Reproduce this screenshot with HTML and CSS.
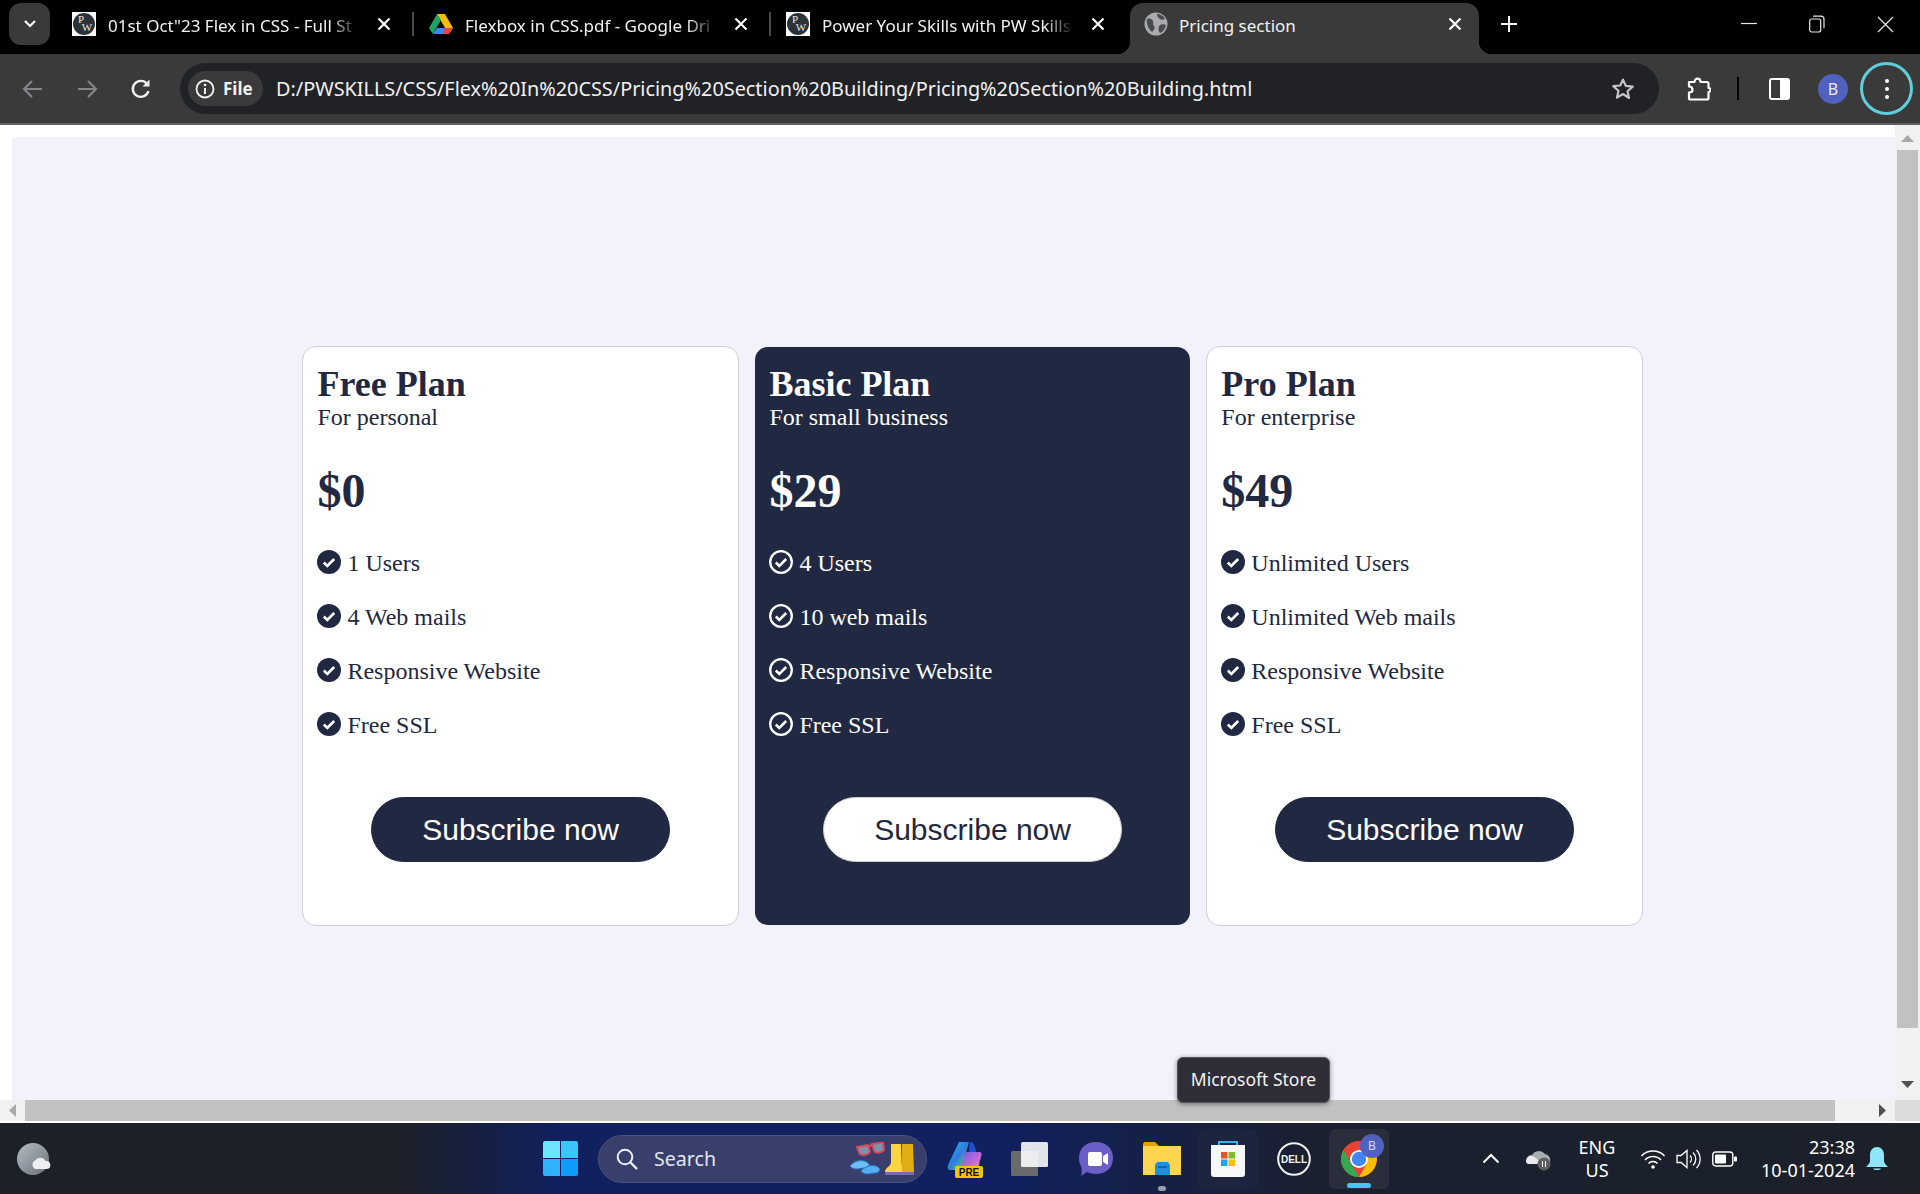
FILE: index.html
```html
<!DOCTYPE html>
<html lang="en">
<head>
<meta charset="utf-8">
<title>Pricing section</title>
<link rel="stylesheet" href="styles.css">
</head>
<body>
<div class="tabstrip">
  <div class="tab-search"><svg width="14" height="10" viewBox="0 0 14 10"><path d="M2 2l5 5 5-5" fill="none" stroke="#fff" stroke-width="2.2"/></svg></div>
  <div class="tab">
    <svg class="favicon" viewBox="0 0 24 24"><rect width="24" height="24" fill="#fff"/><circle cx="12" cy="12" r="11" fill="#2c3238"/><text x="9" y="11" class="pw">P</text><text x="15" y="19" class="pw">W</text></svg>
    <span class="tab-title">01st Oct"23 Flex in CSS - Full St</span>
    <svg class="tab-close" viewBox="0 0 16 16"><path d="M2.5 2.5l11 11M13.5 2.5l-11 11" stroke="#fff" stroke-width="2.2"/></svg>
    <i class="tab-sep"></i>
  </div>
  <div class="tab">
    <svg class="favicon" viewBox="0 0 24 24"><path d="M8 2h8l8 14h-8z" fill="#fbbc04"/><path d="M8 2L0 16l4 6 8-14z" fill="#1fa463"/><path d="M8 16h16l-4 6H4z" fill="#4285f4"/><path d="M20 22l4-6h-8l-2 6z" fill="#ea4335"/></svg>
    <span class="tab-title">Flexbox in CSS.pdf - Google Dri</span>
    <svg class="tab-close" viewBox="0 0 16 16"><path d="M2.5 2.5l11 11M13.5 2.5l-11 11" stroke="#fff" stroke-width="2.2"/></svg>
    <i class="tab-sep"></i>
  </div>
  <div class="tab tab-third">
    <svg class="favicon" viewBox="0 0 24 24"><rect width="24" height="24" fill="#fff"/><circle cx="12" cy="12" r="11" fill="#2c3238"/><text x="9" y="11" class="pw">P</text><text x="15" y="19" class="pw">W</text></svg>
    <span class="tab-title">Power Your Skills with PW Skills</span>
    <svg class="tab-close" viewBox="0 0 16 16"><path d="M2.5 2.5l11 11M13.5 2.5l-11 11" stroke="#fff" stroke-width="2.2"/></svg>
  </div>
  <div class="tab tab-active">
    <svg class="favicon" viewBox="0 0 24 24"><circle cx="12" cy="12" r="11.5" fill="#a9abae"/><path d="M3 7c3-1 5 0 6 2s-1 3 1 5-1 5-2 6c-3-2-6-8-5-13zM13 2c3 0 7 2 8 5-2 1-4 1-5 0s-3-2-3-5zM16 13c2-1 4-1 6 0-1 4-3 7-6 8-2-2-2-6 0-8z" fill="#4a4b4e"/></svg>
    <span class="tab-title tab-title-full">Pricing section</span>
    <svg class="tab-close" viewBox="0 0 16 16"><path d="M2.5 2.5l11 11M13.5 2.5l-11 11" stroke="#fff" stroke-width="2.2"/></svg>
  </div>
  <svg class="new-tab" viewBox="0 0 20 20"><path d="M10 2v16M2 10h16" stroke="#fff" stroke-width="2"/></svg>
  <div class="window-controls">
    <div class="win-btn"><svg width="16" height="16" viewBox="0 0 16 16"><path d="M0 7.5h16" stroke="#e6e6e6" stroke-width="1.2"/></svg></div>
    <div class="win-btn"><svg width="16" height="18" viewBox="0 0 16 18"><rect x=".7" y="4" width="11" height="13" rx="2" fill="none" stroke="#e6e6e6" stroke-width="1.2"/><path d="M4 1.2h8a3 3 0 0 1 3 3v9" fill="none" stroke="#e6e6e6" stroke-width="1.2"/></svg></div>
    <div class="win-btn"><svg width="17" height="17" viewBox="0 0 17 17"><path d="M1 1l15 15M16 1L1 16" stroke="#e6e6e6" stroke-width="1.2"/></svg></div>
  </div>
</div>

<div class="toolbar">
  <div class="nav-btn"><svg width="24" height="24" viewBox="0 0 24 24"><path d="M21 12H4M11 4l-8 8 8 8" fill="none" stroke="#85868a" stroke-width="2.2"/></svg></div>
  <div class="nav-btn"><svg width="24" height="24" viewBox="0 0 24 24"><path d="M3 12h17M13 4l8 8-8 8" fill="none" stroke="#85868a" stroke-width="2.2"/></svg></div>
  <div class="nav-btn"><svg width="24" height="24" viewBox="0 0 24 24"><path d="M19.5 14a8 8 0 1 1-1.6-7.3" fill="none" stroke="#f1f1f1" stroke-width="2.4"/><path d="M20.5 2.5v7h-7z" fill="#f1f1f1"/></svg></div>
  <div class="address">
    <div class="chip"><svg width="20" height="22" viewBox="0 0 20 22"><circle cx="10" cy="11" r="8.5" fill="none" stroke="#f1f1f1" stroke-width="1.8"/><path d="M10 10v6" stroke="#f1f1f1" stroke-width="2"/><circle cx="10" cy="7" r="1.3" fill="#f1f1f1"/></svg><span>File</span></div>
    <span class="url">D:/PWSKILLS/CSS/Flex%20In%20CSS/Pricing%20Section%20Building/Pricing%20Section%20Building.html</span>
    <svg class="star" viewBox="0 0 24 24"><path d="M12 2.6l2.8 6.3 6.9.7-5.2 4.6 1.5 6.8L12 17l-6 3.6 1.5-6.8-5.2-4.6 6.9-.7z" fill="none" stroke="#c4c5c7" stroke-width="2.2" stroke-linejoin="round"/></svg>
  </div>
  <svg class="puzzle" viewBox="0 0 24 24"><path d="M2 5h5.500c0-4.500 6-4.500 6 0H20c1 0 1.500.5 1.500 1.500v4.500c2.500 0 2.500 4 0 4v6c0 1-.5 1.500-1.500 1.500H3.500c-1 0-1.500-.5-1.500-1.500v-5.500c3 0 3.500-1.500 3.500-2.500S5 9.500 2 9.500z" fill="none" stroke="#fff" stroke-width="2.200" stroke-linejoin="round"/></svg>
  <i class="tool-sep"></i>
  <svg class="panel" viewBox="0 0 21 22"><rect x="1" y="1" width="19" height="20" rx="2" fill="none" stroke="#fff" stroke-width="2"/><path d="M11 1h7a2 2 0 0 1 2 2v16a2 2 0 0 1-2 2h-7z" fill="#fff"/></svg>
  <div class="avatar">B</div>
  <div class="menu"><i></i><i></i><i></i></div>
</div>

<div class="browser-view">
  <main class="page">
    <div class="plans">
      <section class="card">
        <h2 class="plan-name">Free Plan</h2>
        <p class="plan-for">For personal</p>
        <p class="price">$0</p>
        <ul class="features">
          <li><svg class="check" viewBox="0 0 24 24"><circle cx="12" cy="12" r="12" fill="#212842"/><path d="M6.800 12.500l3.500 3.400 6.900-6.900" fill="none" stroke="#fff" stroke-width="2.700"/></svg> 1 Users</li>
          <li><svg class="check" viewBox="0 0 24 24"><circle cx="12" cy="12" r="12" fill="#212842"/><path d="M6.800 12.500l3.500 3.400 6.900-6.900" fill="none" stroke="#fff" stroke-width="2.700"/></svg> 4 Web mails</li>
          <li><svg class="check" viewBox="0 0 24 24"><circle cx="12" cy="12" r="12" fill="#212842"/><path d="M6.800 12.500l3.500 3.400 6.900-6.900" fill="none" stroke="#fff" stroke-width="2.700"/></svg> Responsive Website</li>
          <li><svg class="check" viewBox="0 0 24 24"><circle cx="12" cy="12" r="12" fill="#212842"/><path d="M6.800 12.500l3.500 3.400 6.900-6.900" fill="none" stroke="#fff" stroke-width="2.700"/></svg> Free SSL</li>
        </ul>
        <button class="subscribe">Subscribe now</button>
      </section>
      <section class="card card-dark">
        <h2 class="plan-name">Basic Plan</h2>
        <p class="plan-for">For small business</p>
        <p class="price">$29</p>
        <ul class="features">
          <li><svg class="check" viewBox="0 0 24 24"><circle cx="12" cy="12" r="10.800" fill="none" stroke="#fff" stroke-width="2.300"/><path d="M6.800 12.500l3.500 3.400 6.900-6.900" fill="none" stroke="#fff" stroke-width="2.500"/></svg> 4 Users</li>
          <li><svg class="check" viewBox="0 0 24 24"><circle cx="12" cy="12" r="10.800" fill="none" stroke="#fff" stroke-width="2.300"/><path d="M6.800 12.500l3.500 3.400 6.900-6.900" fill="none" stroke="#fff" stroke-width="2.500"/></svg> 10 web mails</li>
          <li><svg class="check" viewBox="0 0 24 24"><circle cx="12" cy="12" r="10.800" fill="none" stroke="#fff" stroke-width="2.300"/><path d="M6.800 12.500l3.500 3.400 6.900-6.900" fill="none" stroke="#fff" stroke-width="2.500"/></svg> Responsive Website</li>
          <li><svg class="check" viewBox="0 0 24 24"><circle cx="12" cy="12" r="10.800" fill="none" stroke="#fff" stroke-width="2.300"/><path d="M6.800 12.500l3.500 3.400 6.900-6.900" fill="none" stroke="#fff" stroke-width="2.500"/></svg> Free SSL</li>
        </ul>
        <button class="subscribe">Subscribe now</button>
      </section>
      <section class="card">
        <h2 class="plan-name">Pro Plan</h2>
        <p class="plan-for">For enterprise</p>
        <p class="price">$49</p>
        <ul class="features">
          <li><svg class="check" viewBox="0 0 24 24"><circle cx="12" cy="12" r="12" fill="#212842"/><path d="M6.800 12.500l3.500 3.400 6.900-6.900" fill="none" stroke="#fff" stroke-width="2.700"/></svg> Unlimited Users</li>
          <li><svg class="check" viewBox="0 0 24 24"><circle cx="12" cy="12" r="12" fill="#212842"/><path d="M6.800 12.500l3.500 3.400 6.900-6.900" fill="none" stroke="#fff" stroke-width="2.700"/></svg> Unlimited Web mails</li>
          <li><svg class="check" viewBox="0 0 24 24"><circle cx="12" cy="12" r="12" fill="#212842"/><path d="M6.800 12.500l3.500 3.400 6.900-6.900" fill="none" stroke="#fff" stroke-width="2.700"/></svg> Responsive Website</li>
          <li><svg class="check" viewBox="0 0 24 24"><circle cx="12" cy="12" r="12" fill="#212842"/><path d="M6.800 12.500l3.500 3.400 6.900-6.900" fill="none" stroke="#fff" stroke-width="2.700"/></svg> Free SSL</li>
        </ul>
        <button class="subscribe">Subscribe now</button>
      </section>
    </div>
  </main>
  <div class="vscroll">
    <svg class="arrow-up" width="13" height="7" viewBox="0 0 13 7"><path d="M6.500 0L13 7H0z" fill="#a8a8a8"/></svg>
    <div class="vthumb"></div>
    <svg class="arrow-down" width="13" height="7" viewBox="0 0 13 7"><path d="M0 0h13L6.500 7z" fill="#505050"/></svg>
  </div>
</div>

<div class="hscroll">
  <div class="h-btn"><svg width="7" height="13" viewBox="0 0 7 13"><path d="M7 0v13L0 6.500z" fill="#a8a8a8"/></svg></div>
  <div class="hthumb"></div>
  <div class="h-track"><svg width="7" height="13" viewBox="0 0 7 13"><path d="M0 0v13l7-6.500z" fill="#505050"/></svg></div>
  <div class="h-corner"></div>
</div>

<footer class="taskbar">
  <svg class="ti weather" viewBox="0 0 34 32"><defs><linearGradient id="moon" x1="0" y1="0" x2="1" y2="1"><stop offset="0" stop-color="#b6bcc4"/><stop offset="1" stop-color="#6c727b"/></linearGradient></defs><ellipse cx="16" cy="16" rx="16" ry="16" fill="url(#moon)"/><path d="M18 26a5 5 0 0 1 .5-9 6 6 0 0 1 10 1 4 4 0 0 1 1.500 8z" fill="#eceef0"/></svg>
  <div class="win-logo"><i class="w1"></i><i class="w2"></i><i class="w3"></i><i class="w4"></i></div>
  <div class="search">
    <svg class="search-icon" viewBox="0 0 22 22"><circle cx="9" cy="9" r="7.300" fill="none" stroke="#eef" stroke-width="2"/><path d="M14.500 14.500L21 21" stroke="#eef" stroke-width="2.400"/></svg>
    <span class="search-label">Search</span>
    <svg class="search-art" viewBox="0 0 66 34"><path d="M8 5l11-2 2 7c-3 4-9 4-11 1zM23 2l11-2 1 8c-3 3-8 4-10 1z" fill="#7f93ad" stroke="#d9475f" stroke-width="2"/><path d="M19 5l4-2" stroke="#d9475f" stroke-width="2"/><path d="M1 24c5-6 13-7 18-3 3 3-1 5-5 5-5 1-10 2-13-2z" fill="#6dbcf5" stroke="#2e7bc8"/><path d="M12 29c5-6 14-7 18-3 2 3-1 5-5 5-5 1-10 2-13-2z" fill="#55aef0" stroke="#2e7bc8"/><path d="M53 2h11l1 28H48c0-4 5-5 5-9z" fill="#e0ae14"/><path d="M42 2h10l1 28H36c0-5 6-5 6-10z" fill="#f9d63f"/><rect x="36" y="30" width="29" height="3" rx="1" fill="#7a6bb0"/></svg>
  </div>
  <svg class="ti copilot" viewBox="0 0 36 38"><defs><linearGradient id="cp1" x1="0" y1="0" x2="1" y2="1"><stop offset="0" stop-color="#2bc0e8"/><stop offset=".5" stop-color="#2f7be0"/><stop offset="1" stop-color="#7ed957"/></linearGradient><linearGradient id="cp2" x1="0" y1="0" x2="1" y2="1"><stop offset="0" stop-color="#6b5be0"/><stop offset=".6" stop-color="#c86ad8"/><stop offset="1" stop-color="#f2a0b0"/></linearGradient></defs><path d="M12 2h10l-8 28H4C1 30 0 28 1 25z" fill="url(#cp1)"/><path d="M23 2c3 0 4 2 5 5l5 18-5 3-8-1z" fill="#2050d0"/><path d="M18 12h14c3 0 3 2 2 5l-3 10c-1 2-2 3-4 3H14z" fill="url(#cp2)"/><rect x="8" y="26" width="28" height="12" rx="2" fill="#fbc400"/><text x="22" y="36" class="pre">PRE</text></svg>
  <svg class="ti taskview" viewBox="0 0 38 34"><rect y="9" width="27" height="25" rx="1.500" fill="#6a6a6a"/><rect x="10" width="27" height="25" rx="1.500" fill="#fff" fill-opacity=".88"/></svg>
  <svg class="ti teams" viewBox="0 0 36 34"><path d="M18 0c10 0 17 6 17 16s-7 16-17 16c-4 0-7-1-9-2l-6 4c1-4 1-7 0-10C1 21 1 18 1 16 1 6 8 0 18 0z" fill="#6a5fc6"/><rect x="10" y="10" width="14" height="14" rx="2" fill="#fff"/><path d="M25 14l5-3v12l-5-3z" fill="#fff"/></svg>
  <div class="ti-wrap explorer"><svg viewBox="0 0 38 33"><path d="M0 2c0-1 1-2 2-2h10l4 4v6H0z" fill="#e3a10c"/><path d="M0 4h38v29H0z" fill="#fdd54e"/><path d="M12 33v-8c0-3 1-5 4-5h7c3 0 4 2 4 5v8z" fill="#1f8edb"/><path d="M15 25h9" stroke="#0b5aa0" stroke-width="1.500"/></svg><i class="dot"></i></div>
  <div class="tb-box store-box"><svg viewBox="0 0 36 36"><path d="M9 5V1h18v4" fill="none" stroke="#35b5f0" stroke-width="2"/><path d="M1 4h34v29c0 2-1 3-3 3H4c-2 0-3-1-3-3z" fill="#f7f7f7"/><rect x="11" y="11" width="6.500" height="6.500" fill="#e8532a"/><rect x="18.500" y="11" width="6.500" height="6.500" fill="#7dbb2b"/><rect x="11" y="18.500" width="6.500" height="6.500" fill="#1ea5ec"/><rect x="18.500" y="18.500" width="6.500" height="6.500" fill="#fbbb16"/></svg></div>
  <svg class="ti dell" viewBox="0 0 34 34"><circle cx="17" cy="17" r="15.800" fill="none" stroke="#f2f2f2" stroke-width="2"/><text x="17" y="20.800" class="dell-text">DELL</text></svg>
  <div class="tb-box chrome-box">
    <svg class="chrome" viewBox="0 0 36 36"><circle cx="18" cy="18" r="18" fill="#e94235"/><path d="M18 36A18 18 0 0 1 2.400 9L11 24z" fill="#34a853"/><path d="M18 36a18 18 0 0 0 16-26H18l7 14z" fill="#fbbc04"/><circle cx="18" cy="18" r="9" fill="#fff"/><circle cx="18" cy="18" r="7.200" fill="#4285f4"/></svg>
    <span class="chrome-badge">B</span>
    <i class="bar"></i>
  </div>
  <svg class="ti tray-up" viewBox="0 0 18 11"><path d="M1.500 9.500L9 2l7.500 7.500" fill="none" stroke="#fff" stroke-width="2"/></svg>
  <svg class="ti onedrive" viewBox="0 0 26 24"><path d="M3 17a5 5 0 0 1 3-9 8 8 0 0 1 13-1c4 1 6 4 5 8z" fill="#a9adb3"/><path d="M0 14c0-3 3-6 6-5 3 1 6 3 8 8H3c-2 0-3-1-3-3z" fill="#e9ebee"/><circle cx="18" cy="17" r="6.500" fill="#5e5e5e"/><path d="M16.500 14v6M19.500 14v6" stroke="#fff" stroke-width="1"/></svg>
  <div class="lang"><span>ENG</span><span>US</span></div>
  <svg class="ti wifi" viewBox="0 0 26 20"><path d="M1.500 7a16 16 0 0 1 23 0M5 11a11 11 0 0 1 16 0M8.500 14.500a6 6 0 0 1 9 0" fill="none" stroke="#fff" stroke-width="1.500"/><circle cx="13" cy="18" r="1.800" fill="#fff"/></svg>
  <svg class="ti sound" viewBox="0 0 26 20"><path d="M1 6.500h4L11 1.500v17l-6-5H1z" fill="none" stroke="#fff" stroke-width="1.300"/><path d="M14 6.500a5 5 0 0 1 0 7M17 3.500a9 9 0 0 1 0 13M20.500 1a13 13 0 0 1 0 18" fill="none" stroke="#fff" stroke-width="1.300"/></svg>
  <svg class="ti battery" viewBox="0 0 26 16"><rect x=".8" y="1" width="20" height="14" rx="3" fill="none" stroke="#fff" stroke-width="1.400"/><rect x="3" y="3.500" width="11" height="9" rx="1" fill="#fff"/><rect x="22" y="5.500" width="3" height="5" rx="1" fill="#fff"/></svg>
  <div class="clock"><span>23:38</span><span>10-01-2024</span></div>
  <svg class="ti bell" viewBox="0 0 22 24"><path d="M11 0c4 0 7 3 7 8v6c0 2 2 4 4 6H0c2-2 4-4 4-6V8c0-5 3-8 7-8z" fill="#8fe6fb"/><path d="M7 21.500h8c-1 2-7 2-8 0z" fill="#8fe6fb"/></svg>
</footer>

<div class="tooltip">Microsoft Store</div>
</body>
</html>
```

FILE: styles.css
```css
* { box-sizing: border-box; }
html, body { margin: 0; padding: 0; }
body {
  position: relative;
  width: 1920px;
  height: 1194px;
  overflow: hidden;
  display: flex;
  flex-direction: column;
  font-family: "Noto Sans", sans-serif;
  background: #fff;
}
svg { display: block; flex: none; }

/* Tab strip */
.tabstrip {
  height: 54px;
  flex: none;
  background: #000;
  display: flex;
  align-items: flex-start;
}
.tab-search {
  width: 41px;
  height: 42px;
  margin: 3px 8px 0 9px;
  border-radius: 12px;
  background: #3a3a3a;
  display: flex;
  align-items: center;
  justify-content: center;
}
.tab {
  width: 357px;
  height: 54px;
  padding: 0 0 6px 14px;
  display: flex;
  align-items: center;
  color: #f1f1f1;
  font-size: 17px;
}
.tab-third { width: 358px; }
.favicon { width: 24px; height: 24px; }
.pw { font: 11px "Liberation Serif", serif; fill: #e8e8e8; text-anchor: middle; }
.tab-title {
  width: 252px;
  margin-left: 12px;
  padding-top: 3px;
  white-space: nowrap;
  -webkit-mask-image: linear-gradient(90deg, #000 88%, transparent 100%);
  mask-image: linear-gradient(90deg, #000 88%, transparent 100%);
}
.tab-close { width: 16px; height: 16px; margin-left: 16px; }
.tab-sep { width: 2px; height: 24px; margin-left: 20px; background: #4a4a4a; }
.tab-active {
  position: relative;
  width: 349px;
  height: 51px;
  margin-top: 3px;
  padding: 0 16px 9px 14px;
  background: #3a3a3a;
  border-radius: 13px 13px 0 0;
}
.tab-active::before, .tab-active::after {
  content: "";
  position: absolute;
  bottom: 0;
  width: 13px;
  height: 13px;
}
.tab-active::before { left: -13px; background: radial-gradient(circle at 0 0, transparent 13px, #3a3a3a 13.500px); }
.tab-active::after { right: -13px; background: radial-gradient(circle at 100% 0, transparent 13px, #3a3a3a 13.500px); }
.tab-title-full {
  flex: 1;
  width: auto;
  margin-left: 11px;
  -webkit-mask-image: none;
  mask-image: none;
}
.tab-active .tab-close { margin-left: 0; }
.new-tab { width: 20px; height: 20px; margin: 14px 0 0 20px; }
.window-controls { display: flex; margin: 0 1px 0 auto; }
.win-btn {
  width: 68px;
  height: 48px;
  display: flex;
  align-items: center;
  justify-content: center;
}

/* Toolbar */
.toolbar {
  height: 71px;
  flex: none;
  padding: 0 0 0 6px;
  background: #3a3a3a;
  border-bottom: 2px solid #5f5f5f;
  display: flex;
  align-items: center;
}
.nav-btn {
  width: 54px;
  display: flex;
  justify-content: center;
}
.address {
  width: 1479px;
  height: 51px;
  margin-left: 12px;
  padding: 0 24px 0 8px;
  border-radius: 26px;
  background: #212226;
  display: flex;
  align-items: center;
  color: #f1f1f1;
}
.chip {
  width: 75px;
  height: 35px;
  padding-left: 7px;
  border-radius: 18px;
  background: #3a3a3a;
  display: flex;
  align-items: center;
  gap: 8px;
  font-size: 17px;
  font-weight: 700;
}
.url { margin-left: 13px; font-size: 19.850px; white-space: nowrap; }
.star { width: 24px; height: 24px; margin-left: auto; }
.puzzle { width: 24px; height: 24px; margin-left: 28px; }
.tool-sep { width: 2px; height: 23px; margin-left: 26px; background: #000; }
.panel { width: 21px; height: 22px; margin-left: 30px; }
.avatar {
  width: 30px;
  height: 30px;
  margin-left: 28px;
  border-radius: 50%;
  background: #5161c0;
  color: #e8ecff;
  font-size: 16px;
  display: flex;
  align-items: center;
  justify-content: center;
}
.menu {
  width: 53px;
  height: 53px;
  margin-left: 12px;
  border-radius: 50%;
  border: 3px solid #5fcfdc;
  display: flex;
  flex-direction: column;
  align-items: center;
  justify-content: center;
  gap: 4px;
}
.menu i { width: 4px; height: 4px; border-radius: 50%; background: #fff; }

/* Browser viewport */
.browser-view {
  height: 975px;
  flex: none;
  display: flex;
}
.page {
  width: 1895px;
  padding: 12px 0 0 12px;
  background: #fff;
  background-clip: content-box;
  position: relative;
}
.plans {
  height: 963px;
  background: #f3f2fc;
  padding: 209px 0 0 290.400px;
  display: grid;
  grid-template-columns: repeat(3, 436.400px);
  grid-auto-rows: 580px;
  column-gap: 15.600px;
  color: #212842;
  font-family: "Liberation Serif", serif;
}
.card {
  background: #fff;
  border: 1px solid #cfcfdb;
  border-radius: 14px;
  padding: 17px 14px 0;
  display: flex;
  flex-direction: column;
}
.card-dark {
  background: #212842;
  background-clip: padding-box;
  border-color: transparent;
  color: #fff;
}
.plan-name { margin: 0; font-size: 36px; line-height: 40px; font-weight: 700; }
.plan-for { margin: 0; font-size: 24px; line-height: 27px; }
.price { margin: 32px 0 0; font-size: 48px; line-height: 55px; font-weight: 700; }
.features {
  list-style: none;
  margin: 32px 0 0;
  padding: 0;
  display: flex;
  flex-direction: column;
  gap: 27px;
  font-size: 24px;
  line-height: 27px;
}
.features li { white-space: nowrap; }
.check {
  display: inline-block;
  width: 24px;
  height: 24px;
  vertical-align: -3px;
}
.subscribe {
  align-self: center;
  width: 299px;
  height: 65px;
  margin-top: 58px;
  border: 1px solid #212842;
  border-radius: 33px;
  background: #212842;
  color: #fff;
  font-family: "Liberation Sans", sans-serif;
  font-size: 30px;
}
.card-dark .subscribe {
  background: #fff;
  border-color: #cfcfcf;
  color: #212842;
}

/* Scrollbars */
.vscroll {
  width: 25px;
  background: #f1f1f1;
  display: flex;
  flex-direction: column;
  align-items: center;
  padding-top: 10px;
}
.vthumb { width: 21px; height: 878px; margin-top: 8px; background: #c1c1c1; }
.arrow-down { margin-top: 53px; }
.hscroll {
  height: 23px;
  flex: none;
  display: flex;
  border-bottom: 2px solid #fff;
  background: #f1f1f1;
}
.h-btn {
  width: 25px;
  display: flex;
  align-items: center;
  padding-left: 9px;
}
.hthumb { width: 1810px; background: #c1c1c1; }
.h-track {
  width: 60px;
  display: flex;
  align-items: center;
  justify-content: flex-end;
  padding-right: 9px;
}
.h-corner { width: 25px; background: #dcdcdc; }

/* Taskbar */
.taskbar {
  height: 71px;
  flex: none;
  display: flex;
  align-items: center;
  color: #fff;
  background: linear-gradient(90deg, #1b2029 0, #1b2029 21%, #11205e 29%, #11205e 52%, #1a2030 68%, #1b2029 100%);
}
.ti, .ti-wrap { flex: none; }
.weather { width: 34px; height: 32px; margin-left: 17px; }
.win-logo {
  width: 35px;
  height: 35px;
  margin-left: 492px;
  display: grid;
  grid-template-columns: 1fr 1fr;
  gap: 1px;
}
.w1 { background: #6fe4ff; border-radius: 2px 0 0 0; }
.w2 { background: #3dc4fb; border-radius: 0 2px 0 0; }
.w3 { background: #2cb3fb; border-radius: 0 0 0 2px; }
.w4 { background: #109cfa; border-radius: 0 0 2px 0; }
.search {
  width: 329px;
  height: 48px;
  margin-left: 20px;
  padding: 0 11px 0 17px;
  border-radius: 24px;
  background: #383f6c;
  border: 1px solid #4a5180;
  display: flex;
  align-items: center;
}
.search-icon { width: 22px; height: 22px; }
.search-label { margin-left: 16px; font-size: 19.600px; color: #e4e6ee; }
.search-art { width: 66px; height: 34px; margin-left: auto; }
.copilot { width: 36px; height: 38px; margin-left: 20px; }
.pre { font: 700 10px "Liberation Sans", sans-serif; fill: #111; text-anchor: middle; }
.taskview { width: 38px; height: 34px; margin-left: 28px; }
.teams { width: 36px; height: 34px; margin-left: 29px; }
.ti-wrap { position: relative; }
.explorer { width: 38px; height: 33px; margin-left: 29px; }
.dot {
  position: absolute;
  left: 15px;
  top: 44px;
  width: 8px;
  height: 5px;
  border-radius: 3px;
  background: #9a9ea8;
}
.tb-box {
  position: relative;
  width: 60px;
  height: 60px;
  border-radius: 6px;
  background: #2a2e3a;
  display: flex;
  align-items: center;
  justify-content: center;
}
.store-box { margin-left: 17px; background: #1c2440; }
.store-box svg { width: 36px; height: 36px; }
.dell { width: 34px; height: 34px; margin-left: 19px; }
.dell-text { font: 700 10px "Liberation Sans", sans-serif; fill: #f2f2f2; text-anchor: middle; }
.chrome-box { margin-left: 18px; }
.chrome { width: 36px; height: 36px; margin-top: 0; }
.chrome-badge {
  position: absolute;
  top: 5px;
  right: 5px;
  width: 24px;
  height: 24px;
  border-radius: 50%;
  background: #5161c0;
  color: #d5dbff;
  font-size: 12px;
  display: flex;
  align-items: center;
  justify-content: center;
}
.bar {
  position: absolute;
  left: 18px;
  bottom: 1px;
  width: 24px;
  height: 5px;
  border-radius: 3px;
  background: #4dc2f5;
}
.tray-up { width: 18px; height: 11px; margin-left: 93px; }
.onedrive { width: 26px; height: 24px; margin-left: 26px; }
.lang {
  width: 44px;
  margin-left: 23px;
  display: flex;
  flex-direction: column;
  align-items: center;
  font-size: 18px;
  line-height: 23px;
}
.wifi { width: 26px; height: 20px; margin-left: 21px; }
.sound { width: 26px; height: 20px; margin-left: 10px; }
.battery { width: 26px; height: 16px; margin-left: 10px; }
.clock {
  width: 100px;
  margin-left: 17px;
  display: flex;
  flex-direction: column;
  align-items: flex-end;
  font-size: 18px;
  line-height: 23px;
}
.bell { width: 22px; height: 24px; margin-left: 11px; }

/* Hover tooltip, lies over the scrollbar */
.tooltip {
  position: absolute;
  left: 1177px;
  top: 1057px;
  width: 153px;
  height: 46px;
  padding-bottom: 2px;
  border-radius: 6px;
  background: #2f2d36;
  box-shadow: 0 1px 5px rgba(0, 0, 0, .45);
  border: 1px solid #55535c;
  color: #f2f2f2;
  font-size: 17.500px;
  display: flex;
  align-items: center;
  justify-content: center;
}
```
